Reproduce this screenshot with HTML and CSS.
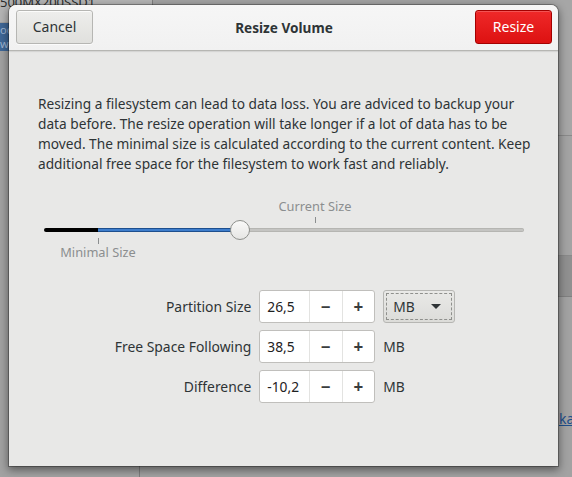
FILE: index.html
```html
<!DOCTYPE html>
<html>
<head>
<meta charset="utf-8">
<link rel="stylesheet" href="styles.css">
</head>
<body>
<div class="desktop">
  <div class="bg-top"><span class="bg-top-text">500MX200SSD1</span></div>
  <div class="bg-vline bg-vline-top"></div>
  <div class="bg-select"><span>oo</span><span>w</span></div>
  <div class="bg-right">
    <div class="bg-r1"></div>
    <div class="bg-r2"></div>
    <div class="bg-r3"></div>
    <div class="bg-r4"><span class="bg-link">kai</span></div>
  </div>
  <div class="bg-vline bg-vline-bottom"></div>

  <div class="dialog">
    <header class="headerbar">
      <button class="btn">Cancel</button>
      <div class="title">Resize Volume</div>
      <button class="btn btn-destructive">Resize</button>
    </header>
    <main class="content">
      <p class="info">Resizing a filesystem can lead to data loss. You are adviced to backup your<br>data before. The resize operation will take longer if a lot of data has to be<br>moved. The minimal size is calculated according to the current content. Keep<br>additional free space for the filesystem to work fast and reliably.</p>

      <div class="slider">
        <div class="mark mark-top" style="left:271px"><span class="mark-label">Current Size</span><span class="tick"></span></div>
        <div class="track">
          <div class="fill-min" style="width:54px"></div>
          <div class="fill-value" style="width:142px"></div>
          <div class="fill-rest"></div>
          <div class="knob" style="left:196px"></div>
        </div>
        <div class="mark mark-bottom" style="left:54px"><span class="tick"></span><span class="mark-label">Minimal Size</span></div>
      </div>

      <div class="form">
        <label class="flabel">Partition Size</label>
        <div class="spin"><span class="spin-entry">26,5</span><span class="spin-btn">&minus;</span><span class="spin-btn">+</span></div>
        <button class="combo"><span>MB</span><span class="arrow"></span></button>

        <label class="flabel">Free Space Following</label>
        <div class="spin"><span class="spin-entry">38,5</span><span class="spin-btn">&minus;</span><span class="spin-btn">+</span></div>
        <span class="unit">MB</span>

        <label class="flabel">Difference</label>
        <div class="spin"><span class="spin-entry">-10,2</span><span class="spin-btn">&minus;</span><span class="spin-btn">+</span></div>
        <span class="unit">MB</span>
      </div>
    </main>
  </div>
</div>
</body>
</html>
```

FILE: styles.css
```css
* { box-sizing: border-box; }
html, body { margin: 0; padding: 0; }
body {
  width: 572px;
  height: 477px;
  overflow: hidden;
  font-family: "Noto Sans", "DejaVu Sans", sans-serif;
  color: #2e3436;
}
.desktop {
  position: relative;
  width: 572px;
  height: 477px;
  background: #a2a2a2;
  overflow: hidden;
}
.bg-top {
  position: absolute;
  left: 0; top: 0;
  width: 152px; height: 22px;
  background: #b4b4b4;
}
.bg-top-text {
  position: absolute;
  left: 0; top: -7px;
  font-size: 13px;
  color: #2a2c2d;
}
.bg-vline {
  position: absolute;
  width: 1px;
  background: #7e7e7e;
}
.bg-vline-top { left: 152px; top: 0; height: 10px; }
.bg-vline-bottom { left: 139px; top: 460px; height: 17px; }
.bg-select {
  position: absolute;
  left: 0; top: 23px;
  width: 20px; height: 28px;
  background: #3f6797;
  color: #9fb6d2;
  font-size: 11px;
  line-height: 14px;
  display: flex;
  flex-direction: column;
  overflow: hidden;
}
.bg-right {
  position: absolute;
  left: 540px; top: 0;
  width: 32px; height: 477px;
  display: flex;
  flex-direction: column;
}
.bg-r1 { height: 136px; background: #a6a6a6; border-bottom: 1px solid #8a8a8a; }
.bg-r2 { height: 120px; background: #a3a3a3; border-bottom: 1px solid #8a8a8a; }
.bg-r3 { height: 41px; background: #909090; border-bottom: 1px solid #808080; }
.bg-r4 { flex: 1; background: #a2a2a2; position: relative; }
.bg-link {
  position: absolute;
  left: 19px; top: 112px;
  font-size: 14px;
  color: #1f4f8c;
  text-decoration: underline;
}

.dialog {
  position: absolute;
  left: 9px; top: 5px;
  width: 549px; height: 461px;
  background: #e8e8e7;
  border-radius: 7px 7px 0 0;
  box-shadow: 0 0 0 1px rgba(0,0,0,0.28), 0 3px 9px 1px rgba(0,0,0,0.45);
  display: flex;
  flex-direction: column;
  overflow: hidden;
}
.headerbar {
  height: 46px;
  flex: none;
  background: linear-gradient(#f6f6f6, #f1f1f1);
  border-bottom: 1px solid #b6b6b3;
  box-shadow: 0 1px 1px rgba(0,0,0,0.08);
  display: flex;
  align-items: center;
  justify-content: space-between;
  padding: 0 6px 1px 7px;
}
.btn {
  width: 77px;
  height: 34px;
  font-family: inherit;
  font-size: 14px;
  color: #2e3436;
  background: linear-gradient(#eeeeec, #e0e0dd);
  border: 1px solid #b6b6b3;
  border-radius: 3px;
  box-shadow: inset 0 1px rgba(255,255,255,0.8), 0 1px rgba(255,255,255,0.7);
  padding: 0 0 1px;
}
.btn-destructive {
  color: #ffffff;
  background: linear-gradient(#ef2929, #dd1111);
  border-color: #a40000;
  box-shadow: inset 0 1px rgba(255,255,255,0.2);
}
.title {
  font-weight: bold;
  font-size: 13.6px;
  color: #2e3436;
}

.content {
  flex: 1;
  padding: 43px 20px 0 29px;
  display: flex;
  flex-direction: column;
}
.info {
  margin: 0;
  font-size: 13.7px;
  line-height: 20px;
  color: #2e3436;
  white-space: nowrap;
}

.slider {
  position: relative;
  margin: 24px 0 0 6px;
  width: 480px;
  height: 70px;
}
.mark {
  position: absolute;
  display: flex;
  flex-direction: column;
  align-items: center;
  width: 120px;
  margin-left: -60px;
}
.mark-top { top: 0; }
.mark-bottom { top: 40px; }
.mark-label {
  font-size: 12.8px;
  line-height: 17px;
  color: #8b8e8f;
  white-space: nowrap;
}
.tick {
  width: 1px;
  height: 6px;
  background: #8b8e8f;
}
.mark-top .tick { margin-top: 2px; }
.mark-bottom .tick { margin-bottom: 0; }
.track {
  position: absolute;
  left: 0; top: 30px;
  width: 480px;
  height: 4px;
  display: flex;
  align-items: center;
}
.fill-min {
  height: 4px;
  background: #000000;
  border-radius: 2px 0 0 2px;
}
.fill-value {
  height: 4px;
  background: #3d7dcc;
  border: 1px solid #1d4f8e;
  border-left: none;
}
.fill-rest {
  flex: 1;
  height: 4px;
  background: #c4c4c2;
  border: 1px solid #b5b5b2;
  border-left: none;
  border-radius: 0 2px 2px 0;
}
.knob {
  position: absolute;
  top: -8px;
  width: 20px;
  height: 20px;
  margin-left: -10px;
  border-radius: 50%;
  background: linear-gradient(#f9f9f8, #e6e6e4);
  border: 1px solid #8e908c;
}

.form {
  margin-top: 22px;
  display: grid;
  grid-template-columns: auto 116px auto;
  grid-auto-rows: 33px;
  row-gap: 7px;
  column-gap: 8px;
  justify-content: center;
  align-items: center;
  padding-right: 6px;
}
.flabel {
  justify-self: end;
  font-size: 13.9px;
  color: #2e3436;
}
.spin {
  height: 33px;
  display: flex;
  background: #ffffff;
  border: 1px solid #c0bfbc;
  border-radius: 3px;
}
.spin-entry {
  width: 49px;
  padding-left: 7px;
  font-size: 13.8px;
  line-height: 31px;
  color: #1e2122;
}
.spin-btn {
  width: 33px;
  border-left: 1px solid #e3e3e1;
  display: flex;
  align-items: center;
  justify-content: center;
  font-size: 17px;
  font-weight: bold;
  line-height: 31px;
  color: #3a3d3e;
}
.combo {
  width: 72px;
  height: 33px;
  font-family: inherit;
  font-size: 13.8px;
  color: #2e3436;
  background: linear-gradient(#e9e9e7, #dcdcd9);
  border: 1px solid #b6b6b3;
  border-radius: 3px;
  outline: 1px dashed #8f908d;
  outline-offset: -4px;
  display: flex;
  align-items: center;
  justify-content: space-between;
  padding: 0 13px 0 9px;
}
.arrow {
  width: 0; height: 0;
  border-left: 5px solid transparent;
  border-right: 5px solid transparent;
  border-top: 5px solid #2e3436;
}
.unit {
  font-size: 13.8px;
  color: #2e3436;
}
```
